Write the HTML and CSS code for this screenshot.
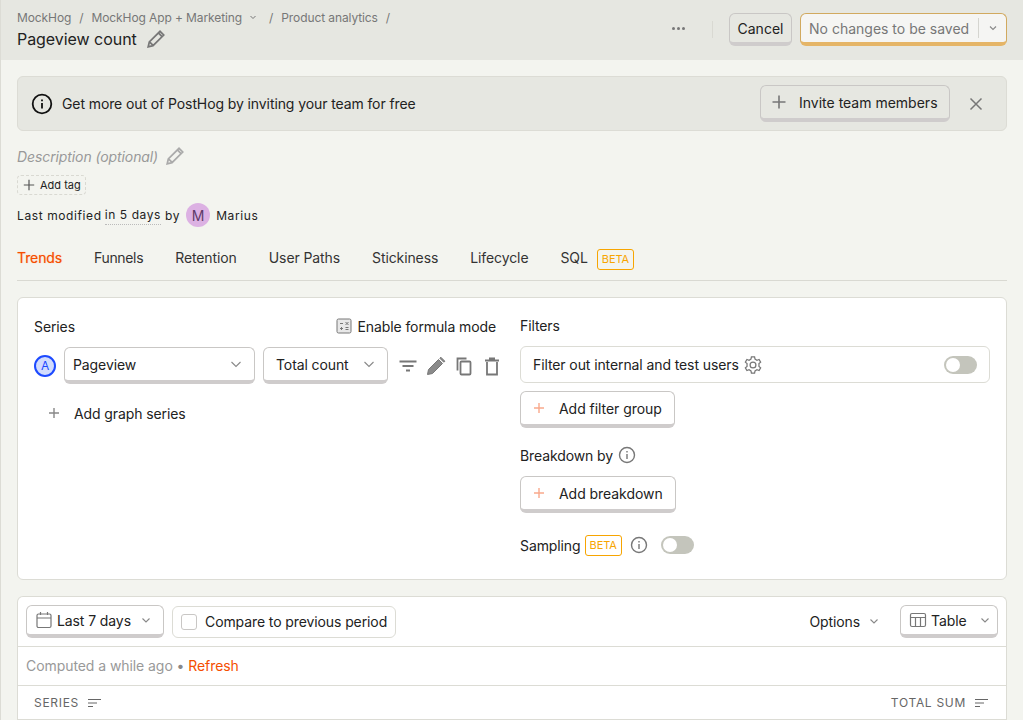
FILE: index.html
```html
<!DOCTYPE html>
<html>

<head>
    <meta charset='utf-8'>
    <title>Pageview count</title>
    <link rel="stylesheet" href="styles.css">
</head>

<body>
    <header class="topbar">
        <div class="topbar-left">
            <div class="crumbs">
                <span>MockHog</span><span class="sep">/</span>
                <span>MockHog App + Marketing</span>
                <svg class="crumb-chev" width="10" height="10" viewBox="0 0 10 10"><path d="M2.500 4l2.500 2.500L7.500 4" /></svg>
                <span class="sep sep-wide">/</span><span>Product analytics</span><span class="sep">/</span>
            </div>
            <div class="title-row">
                <span class="title">Pageview count</span>
                <svg class="pencil" width="18" height="18" viewBox="1 1.500 15.500 15.500"><path d="M2 16l1-4.200L12.200 2.600l3.200 3.200L6.200 15zM10.800 4l3.200 3.200M3.400 12l2.600 2.600" /></svg>
            </div>
        </div>
        <div class="topbar-right">
            <span class="dots"><i></i><i></i><i></i></span>
            <span class="vline"></span>
            <button class="btn btn-cancel">Cancel</button>
            <div class="btn-save">
                <span class="save-label">No changes to be saved</span>
                <span class="save-caret"><svg class="chev" width="12" height="12" viewBox="0 0 12 12"><path d="M3 4.500l3 3 3-3" /></svg></span>
            </div>
        </div>
    </header>

    <main class="content">
        <div class="banner">
            <svg class="banner-icon" width="22" height="22" viewBox="0 0 22 22"><circle cx="11" cy="11" r="9.300" /><path d="M11 10v5.500M11 6.400v1.800" /></svg>
            <span class="banner-text">Get more out of PostHog by inviting your team for free</span>
            <button class="btn btn-invite">
                <svg class="plus" width="16" height="16" viewBox="0 0 16 16"><path d="M8 1.500v13M1.500 8h13" /></svg>
                Invite team members
            </button>
            <svg class="close" width="14" height="14" viewBox="0 0 14 14"><path d="M1.500 1.500l11 11M12.500 1.500l-11 11" /></svg>
        </div>

        <div class="description">
            <span>Description (optional)</span>
            <svg class="pencil pencil-light" width="18" height="18" viewBox="1 1.500 15.500 15.500"><path d="M2 16l1-4.200L12.200 2.600l3.200 3.200L6.200 15zM10.800 4l3.200 3.200M3.400 12l2.600 2.600" /></svg>
        </div>

        <div class="add-tag">
            <svg width="12" height="12" viewBox="0 0 12 12"><path d="M6 .8v10.400M.8 6h10.400" /></svg>
            Add tag
        </div>

        <div class="modified">
            <span>Last modified</span>
            <span class="dotted">in 5 days</span>
            <span>by</span>
            <span class="avatar">M</span>
            <span class="author">Marius</span>
        </div>

        <nav class="tabs">
            <span class="tab tab-active">Trends</span>
            <span class="tab tab-funnels">Funnels</span>
            <span class="tab">Retention</span>
            <span class="tab">User Paths</span>
            <span class="tab">Stickiness</span>
            <span class="tab">Lifecycle</span>
            <span class="tab tab-sql">SQL <span class="beta beta-tab">BETA</span></span>
        </nav>

        <section class="card query">
            <div class="col-left">
                <div class="series-head">
                    <span>Series</span>
                    <span class="formula">
                        <svg width="16" height="16" viewBox="0 0 16 16"><rect x="1" y="1" width="14" height="14" rx="1.500" /><path d="M4 5.500h3M9.500 4l3 3M12.500 4l-3 3M4 10.500h3M5.500 9v3M9.500 9.500h3M9.500 11.500h3" /></svg>
                        Enable formula mode
                    </span>
                </div>
                <div class="series-row">
                    <span class="letter">A</span>
                    <div class="select select-event">Pageview
                        <svg class="chev" width="14" height="14" viewBox="0 0 14 14"><path d="M2.500 5l4.500 4.500L11.500 5" /></svg>
                    </div>
                    <div class="select select-math">Total count
                        <svg class="chev" width="14" height="14" viewBox="0 0 14 14"><path d="M2.500 5l4.500 4.500L11.500 5" /></svg>
                    </div>
                    <div class="row-icons">
                        <svg width="20" height="20" viewBox="0 0 20 20"><path d="M1.500 5.500h17M4.500 10h11M8 14.500h4" /></svg>
                        <svg class="pencil-solid" width="20" height="20" viewBox="0 0 20 20"><path d="M1.500 18.500l1-5L12.500 3.500l4 4-10 10zM13.800 2.200l1-1 4 4-1 1z" /></svg>
                        <svg width="20" height="20" viewBox="0 0 20 20"><rect x="6.500" y="5.500" width="10" height="13" rx="1" /><path d="M3.500 14.500V2.500h9" /></svg>
                        <svg width="20" height="20" viewBox="0 0 20 20"><path d="M5 6v12.500h10V6M3 4.500h14M7 2.500h6" /></svg>
                    </div>
                </div>
                <div class="add-series">
                    <svg class="plus" width="12" height="12" viewBox="0 0 12 12"><path d="M6 1v10M1 6h10" /></svg>
                    Add graph series
                </div>
            </div>
            <div class="col-right">
                <div class="label label-filters">Filters</div>
                <div class="internal">
                    Filter out internal and test users
                    <svg class="gear" width="18" height="18" viewBox="1 1 16 16"><circle cx="9" cy="9" r="2.600" /><path d="M7.600 1.800h2.800l.4 2 1.700 1 1.900-.7 1.400 2.400-1.500 1.300v2.400l1.500 1.300-1.400 2.400-1.900-.7-1.700 1-.4 2H7.600l-.4-2-1.700-1-1.900.7-1.400-2.400 1.500-1.300V7.800L2.200 6.500l1.400-2.400 1.900.7 1.700-1z" /></svg>
                    <span class="toggle toggle-end"></span>
                </div>
                <button class="btn btn-add">
                    <svg width="12" height="12" viewBox="0 0 12 12"><path d="M6 1v10M1 6h10" /></svg>
                    Add filter group
                </button>
                <div class="label label-breakdown">Breakdown by
                    <svg class="info" width="18" height="18" viewBox="0 0 18 18"><circle cx="9" cy="9" r="7.500" /><path d="M9 8v5M9 5v1.500" /></svg>
                </div>
                <button class="btn btn-add">
                    <svg width="12" height="12" viewBox="0 0 12 12"><path d="M6 1v10M1 6h10" /></svg>
                    Add breakdown
                </button>
                <div class="label label-sampling">Sampling
                    <span class="beta">BETA</span>
                    <svg class="info info-sampling" width="18" height="18" viewBox="0 0 18 18"><circle cx="9" cy="9" r="7.500" /><path d="M9 8v5M9 5v1.500" /></svg>
                    <span class="toggle"></span>
                </div>
            </div>
        </section>

        <section class="card results">
            <div class="controls">
                <button class="btn btn-date">
                    <svg width="18" height="18" viewBox="0 0 18 18"><rect x="2" y="3" width="14" height="13.500" rx="1.500" /><path d="M2 7h14M5.500 1v3M12.500 1v3" /></svg>
                    Last 7 days
                    <svg class="chev" width="12" height="12" viewBox="0 0 12 12"><path d="M2.500 4.500L6 8l3.500-3.500" /></svg>
                </button>
                <div class="compare"><span class="checkbox"></span>Compare to previous period</div>
                <div class="options">Options
                    <svg class="chev" width="12" height="12" viewBox="0 0 12 12"><path d="M2.500 4.500L6 8l3.500-3.500" /></svg>
                </div>
                <button class="btn btn-table">
                    <svg width="18" height="18" viewBox="0 0 18 18"><rect x="1.500" y="2.500" width="15" height="13" rx="1.500" /><path d="M1.500 6.500h15M6.500 6.500v9M11.500 6.500v9" /></svg>
                    Table
                    <svg class="chev" width="12" height="12" viewBox="0 0 12 12"><path d="M2.500 4.500L6 8l3.500-3.500" /></svg>
                </button>
            </div>
            <div class="computed">Computed a while ago <span class="bullet">•</span> <span class="refresh">Refresh</span></div>
            <div class="table-head">
                <span class="th">SERIES
                    <svg width="13" height="12" viewBox="0 0 13 12"><path d="M0 2.500h13M0 6h9M0 9.500h5" /></svg>
                </span>
                <span class="th">TOTAL SUM
                    <svg width="13" height="12" viewBox="0 0 13 12"><path d="M0 2.500h13M0 6h9M0 9.500h5" /></svg>
                </span>
            </div>
        </section>
    </main>
</body>

</html>
```

FILE: styles.css
```css
* {
    box-sizing: border-box;
}

html,
body {
    height: 720px;
    overflow: hidden;
}

body {
    margin: 0;
    background-color: #f3f4ef;
    border-left: 1px solid #dcdcd5;
    font-family: Inter, "Liberation Sans", sans-serif;
    font-size: 14px;
    letter-spacing: -0.1px;
    color: #222;
}

svg {
    fill: none;
    stroke: currentColor;
    flex-shrink: 0;
}

.btn {
    display: inline-flex;
    align-items: center;
    font-family: inherit;
    font-size: 14px;
    letter-spacing: -0.1px;
    color: #222;
    background-color: #fff;
    border: 1px solid #c9c7c5;
    border-bottom: 4px solid #cfcccc;
    border-radius: 6px;
    padding: 0;
}

/* top bar */
.topbar {
    height: 60px;
    background-color: #e6e7e1;
    display: flex;
    justify-content: space-between;
    padding: 0 16px;
}

.crumbs {
    display: flex;
    align-items: center;
    height: 16px;
    margin-top: 9px;
    font-size: 12px;
    letter-spacing: -0.1px;
    color: #777;
}

.sep {
    margin: 0 8px;
}

.sep-wide {
    margin-left: 11px;
}

.crumb-chev {
    margin-left: 6px;
    stroke: #777;
}

.title-row {
    display: flex;
    align-items: center;
    margin-top: 3px;
    height: 22px;
}

.title {
    font-size: 16px;
    letter-spacing: -0.05px;
    color: #222;
}

.pencil {
    margin-left: 10px;
    stroke: #777;
    stroke-width: 1.5;
}

.pencil-light {
    stroke: #aaa;
    margin-left: 8px;
}

.topbar-right {
    display: flex;
    align-items: flex-start;
    padding-top: 13px;
}

.dots {
    display: flex;
    gap: 2px;
    margin-top: 14px;
}

.dots i {
    width: 3px;
    height: 3px;
    border-radius: 50%;
    background-color: #777;
    display: block;
}

.vline {
    width: 1px;
    height: 17px;
    background-color: #d9d9d2;
    margin: 8px 16px 0 27px;
}

.btn-cancel {
    height: 33px;
    width: 63px;
    justify-content: center;
    background-color: #e6e7e1;
    letter-spacing: 0;
    margin-right: 8px;
}

.btn-save {
    width: 207px;
    height: 33px;
    display: flex;
    align-items: center;
    background-color: #f5f5f3;
    border: 1px solid #d1a95f;
    border-bottom: 4px solid #e5b567;
    border-radius: 6px;
    color: #777;
    letter-spacing: 0;
}

.save-label {
    padding-left: 8px;
    width: 177px;
}

.save-caret {
    height: 20px;
    border-left: 1px solid #d5d5d0;
    flex: 1;
    display: flex;
    align-items: center;
    justify-content: center;
}

.chev {
    stroke: #888;
    stroke-width: 1.1;
}

/* content */
.content {
    padding: 16px 16px 0;
}

.banner {
    height: 55px;
    display: flex;
    align-items: center;
    background-color: #e6e7e1;
    border: 1px solid #dcdcd5;
    border-radius: 6px;
    padding-left: 13px;
}

.banner-icon {
    stroke: #111;
    stroke-width: 1.8;
}

.banner-text {
    margin-left: 9px;
    flex: 1;
}

.btn-invite {
    width: 190px;
    height: 37px;
    background-color: #e6e7e1;
    padding-left: 10px;
    gap: 12px;
    letter-spacing: 0;
}

.btn-invite .plus {
    stroke: #777;
    stroke-width: 1.6;
}

.close {
    margin: 0 23px 0 19px;
    stroke: #777;
    stroke-width: 1.5;
}

.description {
    display: flex;
    align-items: center;
    margin-top: 14px;
    height: 22px;
    font-style: italic;
    color: #999;
}

.add-tag {
    width: 69px;
    height: 20px;
    margin-top: 8px;
    display: flex;
    align-items: center;
    gap: 5px;
    padding-left: 5px;
    font-size: 11px;
    letter-spacing: 0;
    border: 1px dashed #d9d9d2;
    border-radius: 4px;
}

.add-tag svg {
    stroke: #555;
    stroke-width: 1.2;
}

.modified {
    display: flex;
    align-items: center;
    height: 24px;
    margin-top: 8px;
    font-size: 12px;
    letter-spacing: 0.6px;
}

.dotted {
    margin-left: 3px;
    margin-right: 4px;
    border-bottom: 1px dotted #bbb;
    line-height: 18px;
    margin-top: 1px;
}

.avatar {
    width: 24px;
    height: 24px;
    border-radius: 50%;
    background-color: #dcb1e3;
    color: #5f3b69;
    display: flex;
    align-items: center;
    justify-content: center;
    font-size: 14px;
    letter-spacing: 0;
    margin: 0 6px;
}

.tabs {
    display: flex;
    gap: 32px;
    height: 54px;
    padding-top: 19px;
    border-bottom: 1px solid #d9d9d2;
}

.tab {
    height: 24px;
    line-height: 24px;
    color: #333;
}

.tab-funnels {
    letter-spacing: -0.35px;
}

.tab-sql {
    display: flex;
    align-items: center;
}

.tab-active {
    color: #f54e00;
    text-shadow: 0 0 1px #f9a27a;
}

.beta {
    display: inline-block;
    border: 1px solid #f7a501;
    border-radius: 3px;
    color: #f7a501;
    font-size: 11px;
    line-height: 19px;
    padding: 0 4px;
}

.beta-tab {
    margin-left: 9px;
    margin-top: 3px;
}

/* query card */
.card {
    background-color: #fff;
    border: 1px solid #dcdcd5;
    border-radius: 6px;
}

.query {
    margin-top: 16px;
    height: 283px;
    display: flex;
    padding: 16px;
}

.col-left {
    width: 470px;
    padding-top: 2px;
}

.col-right {
    margin-left: 16px;
    flex: 1;
    display: flex;
    flex-direction: column;
    align-items: flex-start;
}

.series-head {
    display: flex;
    justify-content: space-between;
    height: 20px;
    align-items: center;
    padding-right: 8px;
}

.formula {
    display: flex;
    align-items: center;
    gap: 6px;
}

.formula svg {
    stroke: #777;
    fill: #e8e8e8;
}

.series-row {
    display: flex;
    align-items: center;
    margin-top: 11px;
}

.letter {
    width: 22px;
    height: 22px;
    border-radius: 50%;
    background-color: #d2dcfd;
    border: 2px solid #1d4aff;
    color: #1d4aff;
    font-size: 12px;
    display: flex;
    align-items: center;
    justify-content: center;
    margin-right: 8px;
}

.select {
    height: 37px;
    display: flex;
    align-items: center;
    justify-content: space-between;
    border: 1px solid #c9c7c5;
    border-bottom: 4px solid #cfcccc;
    border-radius: 6px;
    color: #222;
}

.select-event {
    width: 191px;
    padding: 0 11px 0 8px;
}

.select-math {
    width: 125px;
    margin-left: 8px;
    padding: 0 11px 0 12px;
}

.row-icons {
    display: flex;
    gap: 8px;
    margin-left: 10px;
    color: #777;
}

.row-icons svg {
    stroke-width: 1.8;
}

.row-icons .pencil-solid {
    fill: #8a8a8a;
    stroke-width: 1;
}

.add-series {
    display: flex;
    align-items: center;
    gap: 14px;
    margin: 19px 0 0 14px;
    height: 20px;
}

.add-series .plus {
    stroke: #888;
    stroke-width: 1.4;
}

.label {
    display: flex;
    align-items: center;
    height: 20px;
}

.label-filters {
    margin-top: 1px;
}

.internal {
    width: 100%;
    height: 37px;
    margin-top: 11px;
    display: flex;
    align-items: center;
    border: 1px solid #dcdcd5;
    border-radius: 6px;
    padding: 0 12px;
}

.gear {
    margin-left: 5px;
    stroke: #777;
    stroke-width: 1.1;
}

.toggle {
    display: block;
    width: 33px;
    height: 18px;
    border-radius: 9px;
    background-color: #c4c5bc;
    position: relative;
}

.toggle::after {
    content: "";
    position: absolute;
    left: 2px;
    top: 2px;
    width: 14px;
    height: 14px;
    border-radius: 50%;
    background-color: #fff;
}

.toggle-end {
    margin-left: auto;
}

.btn-add {
    height: 37px;
    margin-top: 8px;
    padding: 0 12px;
    gap: 14px;
    letter-spacing: -0.05px;
}

.btn-add svg {
    stroke: #f9a98c;
    stroke-width: 1.4;
}

.label-breakdown {
    margin-top: 17px;
    margin-bottom: 11px;
    gap: 5px;
}

.info {
    stroke: #777;
    stroke-width: 1.4;
}

.label-breakdown + .btn-add {
    margin-top: 0;
}

.label-sampling {
    margin-top: 22px;
    gap: 4px;
}

.info-sampling {
    margin: 0 9px 0 4px;
}

/* results card */
.results {
    margin-top: 16px;
    height: 124px;
    border-bottom: 0;
    border-radius: 6px 6px 0 0;
}

.controls {
    height: 50px;
    display: flex;
    align-items: flex-start;
    padding: 8px 8px 0;
    border-bottom: 1px solid #dcdcd5;
}

.btn-date {
    width: 138px;
    height: 33px;
    padding-left: 8px;
    gap: 4px;
}

.btn-date svg:first-child,
.btn-table svg:first-child {
    stroke: #777;
    stroke-width: 1.2;
}

.btn-date .chev {
    margin-left: 5px;
}

.compare {
    display: flex;
    align-items: center;
    width: 224px;
    height: 32px;
    margin: 1px 0 0 8px;
    padding: 0 0 1px 8px;
    border: 1px solid #dcdcd5;
    border-radius: 6px;
    gap: 8px;
}

.checkbox {
    width: 16px;
    height: 16px;
    border: 1px solid #c9c7c5;
    border-radius: 3px;
}

.options {
    margin-left: auto;
    height: 32px;
    padding-right: 1px;
    display: flex;
    align-items: center;
    gap: 8px;
}

.btn-table {
    width: 98px;
    height: 33px;
    margin-left: 19px;
    padding-left: 8px;
    gap: 4px;
}

.btn-table .chev {
    margin-left: 8px;
}

.computed {
    height: 39px;
    line-height: 38px;
    padding-left: 8px;
    color: #999;
    letter-spacing: -0.07px;
    border-bottom: 1px solid #dcdcd5;
}

.bullet {
    color: #888;
}

.refresh {
    color: #f54e00;
}

.table-head {
    height: 34px;
    display: flex;
    justify-content: space-between;
    align-items: center;
    padding: 0 18px 0 16px;
    border-bottom: 1px solid #dcdcd5;
}

.th {
    display: flex;
    align-items: center;
    gap: 9px;
    font-size: 12px;
    letter-spacing: 0.7px;
    color: #666;
}

.th svg {
    stroke: #666;
}
```
